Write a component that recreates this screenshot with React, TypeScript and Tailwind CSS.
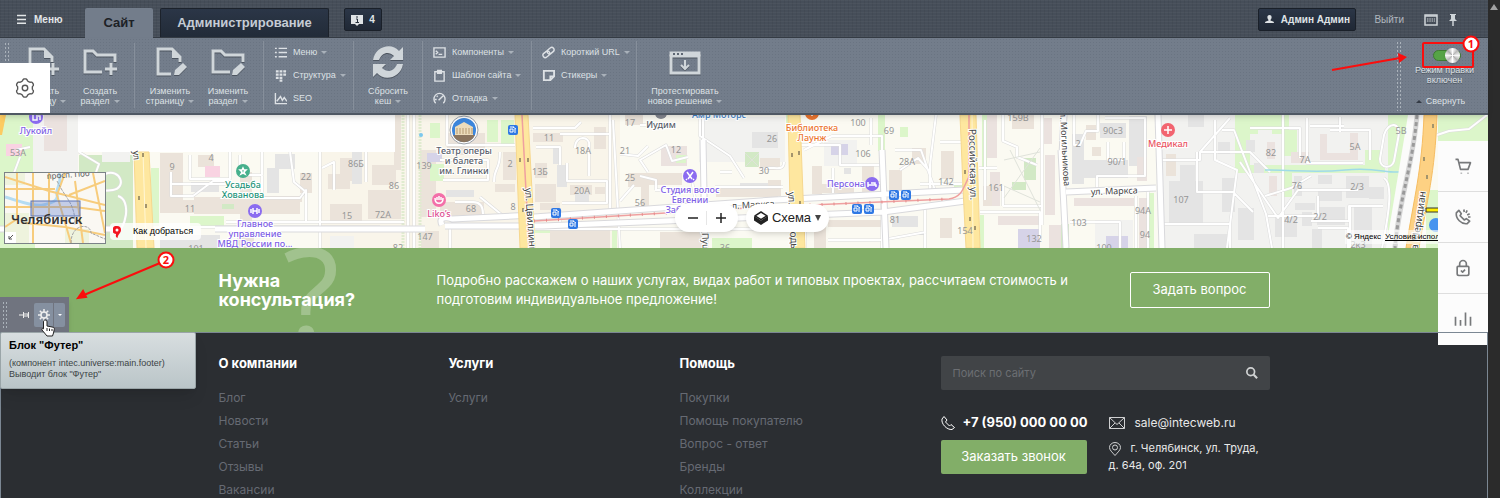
import type { ReactNode } from "react";

type Tint = "sand" | "grey" | "green" | "park" | "violet" | "pink" | "rose" | "land";

const tints: Record<Tint, string> = {
  sand: "#ebe3da",
  grey: "#e4e4e4",
  green: "#dcf6ca",
  park: "#d2e9c5",
  violet: "#d6d3e8",
  pink: "#f9d3e2",
  rose: "#ebe2df",
  land: "#f2f2f0",
};

// x, y, width, height, tint
const areas: [number, number, number, number, Tint][] = [
  [0, 115, 35, 133, "green"], [33, 115, 45, 62, "land"], [44, 115, 23, 36, "rose"], [6, 144, 16, 12, "pink"],
  [79, 155, 54, 93, "park"], [102, 152, 28, 10, "land"], [151, 168, 8, 58, "green"], [160, 153, 23, 49, "sand"],
  [160, 200, 34, 13, "sand"], [194, 197, 106, 17, "sand"], [190, 216, 34, 10, "green"], [191, 182, 28, 10, "grey"],
  [198, 155, 16, 12, "sand"], [205, 166, 15, 11, "pink"], [240, 172, 12, 58, "sand"], [267, 168, 12, 25, "grey"],
  [275, 154, 20, 15, "grey"], [300, 173, 12, 20, "sand"], [222, 204, 12, 5, "park"], [160, 235, 60, 13, "grey"],
  [237, 230, 17, 18, "sand"], [262, 196, 40, 6, "sand"], [340, 158, 15, 23, "sand"], [352, 152, 10, 32, "grey"],
  [328, 174, 22, 15, "sand"], [330, 204, 32, 18, "sand"], [368, 190, 33, 29, "sand"], [372, 165, 24, 20, "sand"],
  [394, 115, 7, 55, "sand"], [430, 123, 10, 15, "green"], [420, 150, 16, 67, "sand"], [427, 153, 15, 9, "violet"],
  [430, 164, 14, 17, "green"], [447, 133, 38, 22, "sand"], [446, 190, 28, 7, "grey"], [440, 202, 44, 15, "sand"],
  [487, 120, 11, 22, "green"], [501, 120, 13, 24, "green"], [503, 152, 13, 28, "sand"], [495, 184, 20, 8, "sand"],
  [533, 133, 30, 9, "sand"], [553, 147, 8, 17, "grey"], [535, 163, 12, 15, "sand"], [557, 165, 10, 22, "grey"],
  [535, 184, 21, 18, "sand"], [570, 185, 22, 10, "sand"], [594, 127, 12, 22, "sand"], [540, 203, 20, 7, "sand"],
  [550, 230, 60, 18, "sand"], [628, 173, 18, 14, "sand"], [641, 180, 8, 26, "sand"], [625, 115, 18, 10, "sand"],
  [595, 187, 10, 7, "sand"], [330, 236, 24, 12, "land"], [421, 231, 18, 17, "sand"], [575, 192, 14, 10, "grey"],
  [530, 230, 20, 3, "green"], [612, 228, 5, 20, "green"], [699, 117, 86, 45, "land"], [752, 132, 26, 16, "grey"],
  [661, 146, 26, 20, "rose"], [676, 155, 10, 8, "green"], [745, 152, 14, 15, "park"], [760, 158, 20, 12, "sand"],
  [716, 188, 62, 9, "sand"], [768, 180, 13, 16, "sand"], [740, 183, 28, 6, "grey"], [642, 173, 40, 12, "sand"],
  [786, 115, 4, 17, "green"], [824, 140, 33, 26, "land"], [831, 144, 17, 11, "violet"], [812, 166, 10, 28, "sand"],
  [822, 184, 32, 9, "sand"], [862, 165, 12, 28, "sand"], [844, 168, 7, 6, "grey"], [889, 170, 13, 24, "sand"],
  [941, 151, 13, 28, "sand"], [912, 148, 14, 16, "sand"], [878, 115, 7, 36, "green"], [900, 127, 8, 10, "green"],
  [814, 216, 12, 32, "sand"], [828, 220, 60, 7, "sand"], [892, 216, 26, 11, "grey"], [660, 232, 44, 16, "sand"],
  [712, 238, 40, 10, "green"], [954, 184, 11, 7, "green"], [940, 218, 12, 20, "sand"], [982, 115, 5, 55, "green"],
  [987, 115, 10, 43, "rose"], [990, 172, 10, 34, "rose"], [983, 186, 9, 20, "sand"], [1012, 115, 22, 14, "sand"],
  [1044, 118, 8, 26, "rose"], [1045, 155, 10, 60, "rose"], [1024, 158, 12, 22, "park"], [1012, 182, 14, 8, "park"],
  [998, 216, 42, 9, "rose"], [1018, 229, 22, 19, "violet"], [980, 215, 4, 33, "green"], [1049, 225, 12, 23, "rose"],
  [1061, 224, 8, 24, "park"], [1072, 134, 12, 50, "grey"], [1084, 160, 44, 18, "grey"], [1100, 123, 26, 15, "grey"],
  [1086, 125, 10, 15, "sand"], [1129, 116, 18, 50, "grey"], [1137, 157, 10, 24, "rose"], [1092, 147, 9, 9, "sand"],
  [1074, 198, 60, 8, "rose"], [1149, 193, 5, 55, "green"], [1139, 198, 9, 50, "rose"], [1095, 220, 38, 28, "land"],
  [1106, 236, 22, 12, "violet"], [1160, 115, 228, 133, "land"], [1169, 181, 34, 43, "grey"], [1180, 165, 15, 25, "grey"],
  [1166, 154, 10, 22, "sand"], [1188, 115, 16, 12, "grey"], [1194, 234, 35, 14, "grey"], [1218, 142, 12, 12, "grey"],
  [1235, 115, 150, 58, "green"], [1250, 115, 135, 50, "land"], [1239, 115, 50, 19, "green"], [1246, 140, 9, 12, "grey"],
  [1258, 130, 14, 26, "land"], [1283, 130, 14, 26, "green"], [1222, 178, 13, 34, "grey"], [1365, 150, 16, 16, "green"],
  [1267, 142, 8, 17, "rose"], [1291, 152, 18, 11, "rose"], [1269, 176, 8, 20, "rose"], [1320, 134, 7, 26, "rose"],
  [1320, 153, 38, 7, "rose"], [1350, 133, 8, 27, "rose"], [1284, 167, 8, 30, "green"], [1254, 163, 10, 10, "grey"],
  [1294, 176, 8, 20, "grey"], [1318, 190, 24, 11, "grey"], [1346, 176, 23, 22, "grey"], [1318, 175, 14, 9, "grey"],
  [1275, 215, 22, 22, "grey"], [1302, 212, 10, 14, "grey"], [1317, 207, 28, 18, "grey"], [1354, 205, 18, 43, "grey"],
  [1312, 229, 10, 19, "grey"], [1295, 203, 20, 7, "grey"], [1238, 208, 16, 32, "grey"], [1438, 115, 50, 28, "green"],
  [1426, 190, 14, 58, "green"], [1369, 187, 15, 12, "grey"], [1388, 115, 22, 133, "green"],
];

// Side streets and yards, drawn as a grey casing with a white core
const lanes = [
  "M16 150l14-3M20 157l-6 16v20", "M8 178h20M79 152l20 12-8 22", "M105 174c16-6 22 14 8 16s-18-2-30 8", "M118 196c14 4 8 34-3 38",
  "M190 155v24h40v-27M171 172v24h22l20-15h15", "M172 184h62M226 222h160", "M200 227h180M240 155v20h22v-24M262 176v22h38l6-8v32",
  "M290 152l4 30 12 10M320 152v96M366 152v30", "M322 168l12-6v28M322 222h82", "M447 115v30h68M440 160h48v20h-45",
  "M480 197l22 18M500 152c0 20-6 14-6 30M455 202h18c8 0 10 6 10 12", "M533 128h42l6-6", "M560 134h50M536 147h24v18M575 148c0-14 16-12 14-2v30",
  "M567 163v18h40v22h-45M610 115v95M613 120l7 128", "M620 154l18 2 10-10M620 201l14-16", "M640 176l16 4v10M640 125h10M700 116v20l30 20 14 22M691 174l10 60",
  "M648 172l-8-12 26-15 6 16 16-4", "M720 172h12M715 187h68M760 170c10-6 24 4 24-8", "M703 115v78M655 190h30", "M850 183h30M800 145h40v20h40",
  "M804 150l28-14h50v34M833 168v25M871 118v27M882 150v98", "M920 184h42M895 150h26l14 40M900 170l18-12 12 14", "M936 115l-6 50v28M940 142h23",
  "M985 120v80M1003 115v26l14 6v10l20 8M979 168h18", "M1042 115v110M1003 206h40M1003 206v-20M980 212h60v28", "M1074 115v30h6l6-14h12v-16",
  "M1105 118h40v58h-48v14", "M1108 142v18h16v-18M1136 196v52M1148 190v60M1070 222h50v26", "M1160 160h40v-8l30-34M1215 120v40l22 10-10 78",
  "M1197 152v40h36l20 20M1160 224h70v24", "M1200 152h50l20 20M1222 130h12l32 84 6 34", "M1240 162l38 56 20-28h60M1265 196l26-8 20-12",
  "M1268 216h50v-20M1311 221h38v-15h34", "M1283 115v133M1250 128h50v30M1307 118v45h56", "M1330 130h40v30M1340 117v15M1310 126h34",
  "M1384 135c4-14 18-14 14 4l-4 22c-2 8-14 8-14-2z", "M1384 178c10 6 4 40-2 70", "M1350 205v43M1318 228h30v20", "M535 229l280 0M828 240h54l44-8",
  "M805 208v40M925 208v40M450 223v25M560 210v14", "M1437 135l12-4 20-2 18-14", "M408 115v133M414 115v133",
];

const mainStreets = [
  "M0 229h120M215 229h210", "M442 225c-4-8 4-8 10-6l82-4", "M445 226h98l340-14 90-12", "M534 217l240-17 190-10",
  "M703 140l2 108", "M882 150l4 98", "M1061 150l5 98", "M1066 192l90-4", "M1158 115l4 133", "M1064 115l-2 40",
];

// x, y, text
const houses: [number, number, string][] = [
  [18, 153, "53А"], [172, 167, "9"], [211, 158, "4"], [190, 209, "11"], [306, 177, "22"], [356, 164, "86Б"], [394, 186, "86"],
  [347, 216, "15"], [383, 215, "72А"], [424, 166, "139"], [425, 237, "147"], [471, 209, "68"], [510, 164, "2"], [513, 207, "8"],
  [549, 138, "11"], [583, 151, "18А"], [540, 172, "13Б"], [630, 123, "17"], [625, 151, "21"], [630, 178, "25"], [640, 203, "56"],
  [582, 191, "20А"], [196, 249, "101"], [398, 248, "82"], [676, 150, "12"], [772, 139, "26"], [764, 171, "30"], [858, 123, "100"],
  [863, 154, "106"], [889, 131, "69"], [907, 162, "28А"], [946, 182, "142"], [895, 220, "81"], [965, 231, "154"], [725, 248, "36"],
  [1018, 118, "159В"], [1078, 144, "2"], [1113, 131, "90с3"], [1117, 162, "90/1"], [996, 188, "161"], [1079, 223, "103"], [1034, 239, "132"],
  [1104, 248, "100"], [1143, 211, "94А"], [1145, 235, "94"], [1181, 200, "107"], [1271, 153, "82"], [1305, 160, "7А"], [1355, 147, "5А"],
  [1401, 131, "5В"], [1297, 186, "76"], [1357, 187, "2/3"], [1291, 220, "4/2"], [1320, 217, "2/2"], [1358, 245, "2к3"],
];

// x, y, colour, lines
const places: [number, number, string, string[]][] = [
  [36, 134, "#7e5fe6", ["Лукойл"]],
  [243, 188, "#25957a", ["Усадьба", "Хованова"]],
  [255, 227, "#7e5fe6", ["Главное", "управление", "МВД России по..."]],
  [464, 154, "#5b5f6b", ["Театр оперы", "и балета", "им. Глинки"]],
  [439, 217, "#dd4b8f", ["Liko’s"]],
  [661, 128, "#5b5f6b", ["Иудим"]],
  [719, 118, "#3f83c9", ["Амр Моторс"]],
  [690, 193, "#7e5fe6", ["Студия волос", "Евгении", "Забелиной"]],
  [812, 131, "#ec7630", ["Библиотека", "Лаунж"]],
  [846, 187, "#7e5fe6", ["Персона"]],
  [1168, 147, "#ea5462", ["Медикал"]],
];

// x, y, colour, glyph path around the centre
const pins: [number, number, string, string][] = [
  [36, 117, "#8b6cf0", "M-3-4v7h4v-7zM2-1h2v4"],
  [243, 171, "#46b08c", "M0-3l1 2h2l-2 2 1 2-2-1-2 1 1-2-2-2h2z"],
  [255, 211, "#8b6cf0", "M-4-2v4M-2-3v6M-2 0h4M2-3v6M4-2v4"],
  [439, 200, "#f36fa9", "M-4-2c0 7 8 7 8 0M-2-3v3M0-4v4M2-3v3"],
  [690, 176, "#8b6cf0", "M-3-4l5 7M3-4l-5 7M-3 3l-1 1M3 3l1 1"],
  [812, 113, "#ec7630", "M0-3v6"],
  [872, 184, "#8b6cf0", "M-4-2v5M-4 1h8v2M-1-1h4v2"],
  [1168, 130, "#f26470", "M0-4v8M-4 0h8"],
];

const trams: [number, number][] = [[513, 130], [556, 213], [573, 224], [894, 195], [906, 195], [857, 209], [869, 209]];

// One-way marks on the main roads
const arrows: [number, number][] = [
  [143, 155], [139, 198], [146, 206], [520, 160], [528, 160], [523, 210], [792, 155], [799, 153],
  [800, 203], [965, 172], [970, 219], [975, 228], [1433, 126], [1424, 159], [1427, 177],
];

function CityMap() {
  return (
    <svg
      viewBox="0 115 1488 133"
      preserveAspectRatio="xMinYMin slice"
      className="block h-[133px] w-full bg-[#fbfaf2] font-['Noto_Sans',sans-serif]"
      role="img"
      aria-label="Карта Челябинска"
    >
      <rect x="320" y="115" width="300" height="133" fill="#f9f5ea" />
      {areas.map(([x, y, w, h, tint], i) => (
        <rect key={i} x={x} y={y} width={w} height={h} fill={tints[tint]} />
      ))}
      <path d="M403 115v133M420 115v133" stroke="#e0ebcf" strokeWidth="3" strokeDasharray="2 1" />
      <g fill="none" strokeLinejoin="round">
        <path d={lanes.join("")} stroke="#dcdcdc" strokeWidth="3" />
        <path d={lanes.join("")} stroke="#ffffff" strokeWidth="2" />
        <path d={mainStreets.join("")} stroke="#d9d9dc" strokeWidth="7" />
        <path d={mainStreets.join("")} stroke="#ffffff" strokeWidth="5" />
        <path d="M1010 150l30 60M1040 148l-36 50M1004 160l36-8M1004 186l36 16M745 153l14 14M759 153l-14 14" stroke="#dfe2da" />
      </g>
      <rect x="78" y="115" width="317" height="37" fill="#ffffff" />
      <path d="M0 115h6l-4 20H0z" fill="#fccb62" />
      <g fill="#fee79f" stroke="#f6d78e">
        <path d="M134 152h15l5 96h-17z" />
        <path d="M515 115h13l7 133h-15z" />
        <path d="M788 115h12l5 133h-14z" />
        <path d="M960 115h16l4 133h-14l-3-60z" />
      </g>
      <path d="M143 152l3 96M972 115l1 133" stroke="#fff7d6" />
      <path d="M522 115l7 133M534 221l230-14 185-8c14-2 14-12 20-22v-62" fill="none" stroke="#efa0a0" strokeWidth="1.5" />
      <path d="M534 221l230-14 185-8" fill="none" stroke="#e58b8b" strokeWidth="3" strokeDasharray="1 11" />
      <path d="M1265 170c30 0 50 3 80 0s40 3 54 2" fill="none" stroke="#9fdbe8" strokeWidth="1.5" />
      <path d="M1408 115h20l-22 133h-20z" fill="#fbfbfa" />
      <path d="M1417 115c-4 50-18 84-22 133" fill="none" stroke="#d6d6d6" strokeWidth="5" />
      <path d="M1417 115c-4 50-18 84-22 133" fill="none" stroke="#9a9a9a" strokeWidth="3" strokeDasharray="4 3" />
      <path d="M1424 115h13c-2 60-10 84-18 133h-13c8-50 16-78 18-133z" fill="#fdd183" stroke="#f6bd62" />
      <g fill="#a3946c">
        {arrows.map(([x, y]) => (
          <path key={`${x}-${y}`} d={`M${x - 1} ${y - 2}h2v4h-2z`} />
        ))}
      </g>
      <g fontSize="9" fill="#969696" textAnchor="middle">
        {houses.map(([x, y, text]) => (
          <text key={`${x}-${y}`} x={x} y={y + 3}>{text}</text>
        ))}
      </g>
      <g fontSize="9" fill="#444444" stroke="#ffffff" strokeWidth="2" paintOrder="stroke">
        <text x="1091" y="195" transform="rotate(-2 1091 195)">ул. Маркса</text>
        <text x="732" y="209" transform="rotate(-3 732 209)">л. Маркса</text>
        <text transform="translate(525 188) rotate(86)" fontSize="10">ул. Цвиллинга</text>
        <text transform="translate(788 192) rotate(87)" fontSize="10">ул. Свободы</text>
        <text transform="translate(702 233) rotate(88)">Пушкина</text>
        <text transform="translate(969 129) rotate(89)" fontSize="10">Российская ул.</text>
        <text transform="translate(1060 112) rotate(87)">л. Могильникова</text>
        <text transform="translate(1417 255) rotate(-82)" fontSize="10">за Меридиан</text>
        <text transform="translate(133 151) rotate(85)">ул</text>
      </g>
      <circle cx="464" cy="130" r="14" fill="#ffffff" stroke="#9aa0a8" />
      <circle cx="464" cy="130" r="12" fill="#3c86dc" />
      <path d="M453 135a12 12 0 0 0 22 0z" fill="#8b755e" />
      <path d="M455 127l9-5 9 5v8h-18z" fill="#ecdcbb" />
      <path d="M457 128v6M460 128v6M463 128v6M466 128v6M469 128v6M472 128v6" stroke="#b59a72" />
      {pins.map(([x, y, color, d]) => (
        <g key={`${x}-${y}`} transform={`translate(${x} ${y})`}>
          <circle r="7" fill={color} />
          <path d={d} fill="none" stroke="#ffffff" strokeWidth="1.5" />
        </g>
      ))}
      {trams.map(([x, y]) => (
        <g key={`${x}-${y}`} transform={`translate(${x} ${y})`}>
          <rect x="-5" y="-5" width="10" height="10" rx="2" fill="#2f78e4" />
          <path d="M-3-3h4M-3-1h3v3h-3zM2-1v4M0-3l3 2" fill="none" stroke="#ffffff" />
        </g>
      ))}
      <circle cx="661" cy="113" r="6" fill="#858891" />
      <circle cx="421" cy="135" r="2" fill="#7cc8ee" />
      <circle cx="1436" cy="225" r="7" fill="#4794ef" />
      <g fontSize="9" fontWeight="500" textAnchor="middle" stroke="#ffffff" strokeWidth="2" paintOrder="stroke">
        {places.map(([x, y, color, lines]) => (
          <text key={`${x}-${y}`} fill={color}>
            {lines.map((line, i) => (
              <tspan key={line} x={x} y={y + i * 10}>{line}</tspan>
            ))}
          </text>
        ))}
      </g>
      <path d="M1426 208h14v4h-14z" fill="#ffee00" stroke="#333333" />
    </svg>
  );
}

function MiniMap() {
  return (
    <svg viewBox="0 0 100 70" className="block h-[70px] w-[100px] bg-[#faf8f3] font-['Noto_Sans',sans-serif]" role="img" aria-label="Обзорная карта">
      <path d="M0 0h20v12H0zM0 40h24v30H0zM60 56h24v14H60z" fill="#eef3dd" />
      <path d="M54 0c4 10-4 16-2 22s-6 8-14 10-24-4-38-8" fill="none" stroke="#b4dcf2" strokeWidth="3" />
      <path d="M0 4l44 14 56 14M0 16h50M12 0v46l-12 8M28 0v70M44 0v50M0 34h70l30 4M60 0l-8 22 14 48M70 8l8 62M88 0l12 60M64 22l36-14M20 50l40 4 40 8" fill="none" stroke="#f7cc7c" strokeWidth="2" />
      <path d="M52 8c10 20 18 22 18 44M66 70c0-20 20-20 20-10l14 6" fill="none" stroke="#a4a4a4" strokeDasharray="3 1" />
      <rect x="26" y="28" width="49" height="15" fill="#5f7fd0" fillOpacity="0.35" stroke="#5d74b5" />
      <text x="42" y="6" fontSize="8" fill="#555555" transform="rotate(-4 42 6)">просп. Поб</text>
      <text x="6" y="51" fontSize="13" fontWeight="600" fill="#333333">Челябинск</text>
      <rect x="0" y="59" width="11" height="11" fill="#ffffff" />
      <path d="M8 62l-4 4M4 63v3h3" fill="none" stroke="#555555" />
    </svg>
  );
}

// Wavy closed outline with n rounded lobes, centred in a 24 unit box
function cogPath(n: number, radius: number, depth: number) {
  const points = Array.from({ length: 120 }, (_, i) => {
    const a = (i / 120) * Math.PI * 2;
    const r = radius + depth * Math.tanh(2 * Math.cos(a * n));
    return `${(12 + r * Math.sin(a)).toFixed(2)} ${(12 - r * Math.cos(a)).toFixed(2)}`;
  });
  return `M${points.join("L")}Z`;
}

function Glyph({ children, className = "size-[14px]" }: { children: ReactNode; className?: string }) {
  return (
    <svg viewBox="0 0 14 14" className={`shrink-0 ${className}`} fill="none" stroke="currentColor" strokeWidth="1.5" aria-hidden="true">
      {children}
    </svg>
  );
}

const plus = <path d="M29 17v12M23 23h12" />;
const pencil = <path d="M22 29l1-5 8-7 4 4-8 8z" fill="currentColor" stroke="none" />;
const page = (
  <>
    <path d="M19 28H6V3h14l8 8v5" />
    <path d="M20 2v10h9z" fill="currentColor" stroke="none" />
  </>
);
const folder = <path d="M20 26H3V5h8l4 4h18v7" />;

function BigIcon({ children }: { children: ReactNode }) {
  return (
    <svg viewBox="0 0 36 32" className="h-8 w-9 text-[#d0d6da] drop-shadow-[0_1px_0_#4d5560]" fill="none" stroke="currentColor" strokeWidth="3" aria-hidden="true">
      {children}
    </svg>
  );
}

function Caret() {
  return <span className="ml-1 inline-block border-x-[3px] border-t-[3px] border-x-transparent border-t-[#a9b1ba] align-middle" />;
}

function BigButton({ icon, lines, className = "w-[58px]" }: { icon: ReactNode; lines: [string, string]; className?: string }) {
  return (
    <button type="button" className={`flex flex-col items-center gap-2 pt-2 text-[9px] leading-[10px] ${className}`}>
      <BigIcon>{icon}</BigIcon>
      <span className="whitespace-nowrap">
        {lines[0]}
        <br />
        {lines[1]}
        <Caret />
      </span>
    </button>
  );
}

function SmallButton({ icon, label, caret = true }: { icon: ReactNode; label: string; caret?: boolean }) {
  return (
    <button type="button" className="flex h-[23px] shrink-0 items-center gap-[6px] text-[9px] whitespace-nowrap">
      <Glyph className="size-[13px]">{icon}</Glyph>
      <span>
        {label}
        {caret && <Caret />}
      </span>
    </button>
  );
}

function Grip({ className }: { className: string }) {
  return <div className={`w-[5px] bg-[radial-gradient(#aab2ba_1px,transparent_1px)] bg-[length:3px_4px] ${className}`} />;
}

function TopBar() {
  return (
    <header className="flex h-[38px] items-start border-b border-[#353c45] bg-[#464e59] bg-[repeating-linear-gradient(0deg,#ffffff08_0_1px,transparent_1px_3px),repeating-linear-gradient(90deg,#0000000d_0_1px,transparent_1px_4px)] pt-2 text-[10px]">
      <button type="button" className="flex h-[22px] w-[85px] items-center gap-2 pl-4 font-bold text-[#e3e6e8]">
        <svg viewBox="0 0 10 10" className="size-[10px]" stroke="currentColor" strokeWidth="1.5" aria-hidden="true">
          <path d="M1 1.5h9M1 5.5h9M1 9.2h9" />
        </svg>
        Меню
      </button>
      <nav className="flex gap-[7px] text-[13px] font-bold">
        <a href="#site" className="flex h-[30px] w-[68px] items-center justify-center rounded-t-xs bg-[#737d8b] text-[#1d2126]">Сайт</a>
        <a href="#admin" className="flex h-[29px] w-[169px] items-center justify-center rounded-t-xs border border-b-0 border-[#1c222b] bg-linear-to-b from-[#2b3647] to-[#222b38] text-[#c5ccd5]">Администрирование</a>
      </nav>
      <button type="button" className="ml-[15px] flex h-[23px] w-[38px] items-center justify-center gap-[6px] rounded-xs border border-[#1a2029] bg-linear-to-b from-[#2b3647] to-[#202835] font-bold text-[#dfe3e6]">
        <svg viewBox="0 0 12 12" className="size-3" aria-hidden="true">
          <path d="M0 1h12v9H8l-2 2-2-2H0z" fill="#dfe3e6" />
          <path d="M5 3h2M5 5h1.5v3M4.5 8.500h3.5" stroke="#27303d" fill="none" />
        </svg>
        4
      </button>
      <div className="mr-7 ml-auto flex items-center">
        <button type="button" className="flex h-[23px] w-[98px] items-center justify-center gap-[7px] rounded-xs border border-[#1a2029] bg-linear-to-b from-[#2b3647] to-[#202835] font-bold whitespace-nowrap text-[#dfe3e6]">
          <svg viewBox="0 0 10 10" className="size-[9px] shrink-0" fill="currentColor" aria-hidden="true">
            <path d="M5 0c2 0 2.5 1.5 2.3 3S6 5.200 6 6l3 1.200c.8.4 1 1 1 1.800H0c0-.8.2-1.4 1-1.800L4 6c0-.8-1.1-1.5-1.3-3S3 0 5 0z" />
          </svg>
          Админ Админ
        </button>
        <a href="#logout" className="ml-[18px] text-[#b0b7bf]">Выйти</a>
        <button type="button" aria-label="Горячие клавиши" className="ml-[20px] text-[#cfd5d9]">
          <Glyph>
            <path d="M1 2h12v10H1z" />
            <path d="M1 3h12" />
            <path d="M3 6h8M3 8h8" strokeDasharray="1.5 0.8" strokeWidth="1" />
          </Glyph>
        </button>
        <button type="button" aria-label="Закрепить панель" className="ml-2 text-[#cfd5d9]">
          <Glyph>
            <path d="M4 1h6v1H9v4l2 2H3l2-2V2H4z" fill="currentColor" stroke="none" />
            <path d="M7 8v5" />
          </Glyph>
        </button>
      </div>
    </header>
  );
}

function Toolbar() {
  return (
    <div className="relative flex h-[77px] border-b-2 border-[#4f5864] bg-[#737d8b] bg-[radial-gradient(#6a7482_1px,transparent_1px)] bg-[length:3px_3px] text-[#dde1e5] shadow-md [text-shadow:0_1px_0_#4d5560]">
      <Grip className="mt-1 ml-1 h-[68px]" />
      <div className="ml-1 flex">
        <BigButton icon={<>{page}{plus}</>} lines={["Создать", "страницу"]} />
        <BigButton icon={<>{folder}{plus}</>} lines={["Создать", "раздел"]} />
      </div>
      <div className="my-[5px] ml-[5px] border-l border-[#868f9b]" />
      <div className="flex px-[6px]">
        <BigButton icon={<>{page}{pencil}</>} lines={["Изменить", "страницу"]} />
        <BigButton icon={<>{folder}{pencil}</>} lines={["Изменить", "раздел"]} />
      </div>
      <div className="mt-[3px] mb-[3px] flex w-[91px] flex-col border-x border-[#868f9b] pl-[10px]">
        <SmallButton label="Меню" icon={<path d="M5 2.500h9M5 7h9M5 11.500h9M1 2.500h2M1 7h2M1 11.500h2" />} />
        <SmallButton label="Структура" icon={<path d="M2 2.500h3M6 2.500h3M10 2.500h3M2 6h3M6 6h3M10 6h3M2 9.500h3M6 9.500h3M6 12.500h3" strokeWidth="2.5" />} />
        <SmallButton label="SEO" caret={false} icon={<path d="M1.5 1v11.500H14M3 10l4-5 2 4 2-3 3 4" />} />
      </div>
      <BigButton
        className="w-[68px]"
        lines={["Сбросить", "кеш"]}
        icon={
          <g fill="currentColor" stroke="none">
            <path d="M3 14C5 0 22-4 29 5l4-4v13H20l4-4c-5-5-12-4-15 4z" />
            <path d="M33 18C31 32 14 36 7 27l-4 4V18h13l-4 4c5 5 12 4 15-4z" />
          </g>
        }
      />
      <div className="mt-[3px] mb-[3px] flex w-[109px] flex-col border-l border-[#868f9b] pl-[10px]">
        <SmallButton label="Компоненты" icon={<path d="M1 2h12v10H1zM3 5l2 2-2 2M6 9h4" />} />
        <SmallButton label="Шаблон сайта" icon={<path d="M2 3h10v10H2zM5 1.500h4v3H5z" />} />
        <SmallButton label="Отладка" icon={<path d="M3 12a6 6 0 1 1 8 0M6 9l5-5M2 8h2M4 4l1 1" />} />
      </div>
      <div className="mt-[3px] mb-[3px] flex w-[106px] flex-col border-x border-[#868f9b] pl-[10px]">
        <SmallButton
          label="Короткий URL"
          icon={
            <g transform="rotate(-40 7 7)">
              <rect x="0" y="4.5" width="8" height="5" rx="2.5" />
              <rect x="6" y="4.5" width="8" height="5" rx="2.5" />
            </g>
          }
        />
        <SmallButton label="Стикеры" icon={<path d="M2 2h11v6l-4 4H2zM13 8H9v4" strokeWidth="2" />} />
      </div>
      <BigButton
        className="w-24"
        lines={["Протестировать", "новое решение"]}
        icon={
          <>
            <path d="M4 10h28v17H4z" />
            <path d="M2.5 5.500h31v5h-31z" fill="currentColor" stroke="none" />
            <path d="M6 8h2M10 8h2M14 8h2" stroke="#5d6673" strokeWidth="2" />
            <path d="M18 14v9M14 19l4 4 4-4" strokeWidth="2" />
          </>
        }
      />
      <Grip className="mt-[3px] ml-auto h-[70px]" />
      <div className="flex w-[87px] flex-col items-center pt-3 text-[9px] leading-[10px]">
        <label className="flex flex-col items-center text-center">
          <input
            type="checkbox"
            defaultChecked
            className="relative mb-1 ml-[6px] h-[11px] w-[28px] appearance-none rounded-full border border-[#3f7a32] bg-[#56a346] before:absolute before:-top-[3px] before:right-0 before:size-[15px] before:rounded-full before:bg-[conic-gradient(#fff,#b9b9b9,#f5f5f5,#b0b0b0,#fff,#b9b9b9,#f5f5f5,#b0b0b0,#fff)] before:shadow"
          />
          Режим правки
          <br />
          включен
        </label>
        <button type="button" className="mt-[11px] flex items-center gap-1 pr-2">
          <span className="border-x-[3px] border-b-[3px] border-x-transparent border-b-[#343b45]" />
          Свернуть
        </button>
      </div>

      <button type="button" aria-label="Настройки" className="absolute top-[25px] left-0 flex h-[50px] w-[50px] items-center justify-center bg-white text-[#555555]">
        <svg viewBox="0 0 24 24" className="size-[22px]" fill="none" stroke="currentColor" strokeWidth="1.5" strokeLinejoin="round" aria-hidden="true">
          <path d={cogPath(6, 9, 1)} />
          <circle cx="12" cy="12" r="3" />
        </svg>
      </button>

      <svg viewBox="1308 38 180 77" className="pointer-events-none absolute top-0 right-0 h-[77px] w-[180px] overflow-visible" fill="none" stroke="#fb0d0d" strokeWidth="2" aria-hidden="true">
        <rect x="1423" y="43" width="50" height="24" rx="1" />
        <path d="M1332 70l68-12" />
        <path d="M1398 53l9 4-8 6z" fill="#fb0d0d" stroke="none" />
        <circle cx="1471" cy="44" r="7.5" fill="#ffffff" />
        <text x="1471" y="48" fontSize="11" fontWeight="700" textAnchor="middle" fill="#fb0d0d" stroke="none" className="font-['Open_Sans',sans-serif] [text-shadow:none]">1</text>
      </svg>
    </div>
  );
}

function MapSection() {
  return (
    <section className="relative h-[133px] overflow-hidden">
      <CityMap />
      <div className="absolute bottom-1 left-1 border border-[#7b8287]">
        <MiniMap />
      </div>
      <button type="button" className="absolute bottom-2 left-[110px] flex h-[17px] items-center gap-3 rounded-sm bg-white/80 px-[3px] pr-2 font-['Liberation_Sans',sans-serif] text-[9px] text-black">
        <svg viewBox="0 0 8 12" className="h-3 w-2" aria-hidden="true">
          <path d="M4 0a4 4 0 0 1 4 4c0 3-3 4-3.5 8C2 11 3 9 3 8a4 4 0 0 1 1-8z" fill="#f31621" />
          <circle cx="4" cy="4" r="1.5" fill="#ffffff" />
        </svg>
        Как добраться
      </button>
      <div className="absolute top-[89px] left-[675px] flex gap-2 font-['Liberation_Sans',sans-serif] text-[13px] text-[#222222]">
        <div className="flex h-7 w-[63px] items-center divide-x divide-[#e6e6e6] rounded-full bg-white shadow-md">
          <button type="button" aria-label="Отдалить" className="flex flex-1 justify-center pl-1">
            <Glyph><path d="M2 7h10" /></Glyph>
          </button>
          <button type="button" aria-label="Приблизить" className="flex flex-1 justify-center pr-1">
            <Glyph><path d="M2 7h10M7 2v10" /></Glyph>
          </button>
        </div>
        <button type="button" className="flex h-7 w-[83px] items-center justify-center gap-1 rounded-full bg-white whitespace-nowrap shadow-md">
          <svg viewBox="0 0 14 14" className="size-[14px] shrink-0" fill="none" stroke="currentColor" strokeLinejoin="round" aria-hidden="true">
            <path d="M7 1l6 3.800L7 8.600 1 4.800z" strokeWidth="1.5" />
            <path d="M0 5v4.500L7 14l7-4.500V5L7 9.500z" fill="currentColor" stroke="none" />
          </svg>
          Схема
          <span className="border-x-[3px] border-t-[6px] border-x-transparent border-t-[#444444]" />
        </button>
      </div>
      <p className="absolute bottom-1 left-[1345px] flex h-[14px] items-center gap-1 bg-white/60 px-px font-['Liberation_Sans',sans-serif] text-[8px] whitespace-nowrap text-black">
        © Яндекс <a href="#terms" className="underline">Условия использования</a>
      </p>
    </section>
  );
}

function Consultation() {
  return (
    <section className="relative h-[84px] overflow-hidden bg-[#82ae68] font-[Inter,sans-serif] text-white">
      <span className="absolute -top-[22px] left-[283px] font-['Noto_Sans',sans-serif] text-[130px] leading-[130px] text-white/25" aria-hidden="true">?</span>
      <div className="relative mx-auto flex max-w-[1051px] pt-[23px]">
        <h2 className="w-[218px] shrink-0 text-[18px] leading-[19px] font-bold">Нужна<br />консультация?</h2>
        <p className="w-[650px] text-[13px] leading-[19px]">
          Подробно расскажем о наших услугах, видах работ и типовых проектах, рассчитаем стоимость и подготовим индивидуальное предложение!
        </p>
        <button type="button" className="mt-px ml-auto h-9 w-[140px] rounded-xs border border-white text-[13px]">Задать вопрос</button>
      </div>
    </section>
  );
}

const columns = [
  { title: "О компании", links: ["Блог", "Новости", "Статьи", "Отзывы", "Вакансии"] },
  { title: "Услуги", links: ["Услуги"] },
  { title: "Помощь", links: ["Покупки", "Помощь покупателю", "Вопрос - ответ", "Бренды", "Коллекции"] },
];

function Footer() {
  return (
    <footer className="relative h-[166px] bg-[#2b2e32] font-[Inter,sans-serif] text-white">
      <div className="mx-auto grid max-w-[1051px] grid-cols-[230px_231px_261px_1fr] pt-[22px]">
        {columns.map((column) => (
          <nav key={column.title} className="text-[12px]">
            <h3 className="text-[13px] leading-[18px] font-bold">{column.title}</h3>
            <ul className="mt-[14px] leading-[23px] text-[#666a73]">
              {column.links.map((link) => (
                <li key={link}><a href="#footer">{link}</a></li>
              ))}
            </ul>
          </nav>
        ))}
        <div className="pt-[2px] text-[12px] text-[#e8e8e8]">
          <form className="flex h-[34px] items-center rounded-xs bg-[#414447] pr-3" onSubmit={(e) => e.preventDefault()}>
            <input type="search" aria-label="Поиск по сайту" placeholder="Поиск по сайту" className="h-full min-w-0 flex-1 px-3 text-[11px] outline-none placeholder:text-[#6c6f73]" />
            <button type="submit" aria-label="Найти" className="text-[#d0d2d3]">
              <Glyph className="size-3"><circle cx="5.5" cy="5.5" r="4.5" strokeWidth="2" /><path d="M9 9l4 4" strokeWidth="2.5" /></Glyph>
            </button>
          </form>
          <div className="mt-[23px] flex gap-[22px]">
            <div className="w-[146px] shrink-0">
              <a href="tel:+79500000000" className="flex h-[19px] items-center gap-2 text-[13px] font-bold whitespace-nowrap text-white">
                <Glyph>
                  <path d="M1 3l2-2.500 3 3.500-1.5 2 4 4 1.5-1.5 3.500 3-2.500 2C6 14 0 8 1 3z" strokeWidth="1" />
                </Glyph>
                +7 (950) 000 00 00
              </a>
              <button type="button" className="mt-2 h-[34px] w-full rounded-xs bg-[#82ae68] text-[13px] text-white">Заказать звонок</button>
            </div>
            <div className="flex-1">
              <a href="mailto:sale@intecweb.ru" className="flex h-[20px] items-center gap-[10px]">
                <svg viewBox="0 0 16 12" className="h-3 w-4" fill="none" stroke="#cfd0d1" aria-hidden="true">
                  <path d="M.5.500h15v11H.5zM.5.500L8 7.500l7.500-7M.5 11.500L6 6M15.500 11.500L10 6" />
                </svg>
                sale@intecweb.ru
              </a>
              <address className="mt-[7px] text-[11px] leading-[17px] not-italic">
                <svg viewBox="0 0 12 14" className="mr-[10px] inline-block h-[14px] w-3" fill="none" stroke="#cfd0d1" aria-hidden="true">
                  <path d="M6 13.500C3 10 .5 8 .5 5.500a5.500 5 0 0 1 11 0C11.500 8 9 10 6 13.500z" />
                  <circle cx="6" cy="5.500" r="2.500" />
                </svg>
                г. Челябинск, ул. Труда, д. 64а, оф. 201
              </address>
            </div>
          </div>
        </div>
      </div>
      <div className="pointer-events-none absolute inset-0 z-20 border border-b-0 border-[#7b8793]" />
    </footer>
  );
}

const sideIcons = [
  { label: "Корзина", d: "M3 4h3l3 12h9L21 8H8M10 20v1M18 20v1" },
  { label: "Заказать звонок", d: "M4 7l3-3 3 4-1.500 2.500 5 5L16 14l4 3-3 3C10 21 3 14 4 7zM13 3l.5 3M17 4l-1.500 3M20 8l-3 1.500M21 12h-3" },
  { label: "Войти", d: "M6 10h12c1 0 1 0 1 1v8c0 1-1 2-2 2H7c-1 0-2-1-2-2v-8c0-1 0-1 1-1zM8 10V7a4 4 0 0 1 8 0v3M9.500 15l2 2 3-3" },
  { label: "Сравнение", d: "M3 8v11M9 12v7M15 3v16M21 8v11" },
];

function SidePanel() {
  return (
    <aside className="absolute top-[141px] right-0 z-10 flex h-[204px] w-[50px] flex-col divide-y divide-[#dedede] bg-[#fcfcfc] text-[#77797b]">
      {sideIcons.map((icon) => (
        <button key={icon.label} type="button" aria-label={icon.label} className="flex h-[51px] items-center justify-center">
          <svg viewBox="0 0 24 24" className="size-5" fill="none" stroke="currentColor" strokeWidth="2" strokeLinejoin="round" aria-hidden="true">
            <path d={icon.d} />
          </svg>
        </button>
      ))}
    </aside>
  );
}

function BlockEditor() {
  return (
    <div className="absolute top-[297px] left-0 z-30 w-[196px]">
      <div className="flex h-[35px] w-[69px] items-center bg-[#70747f] text-[#eeeeee] shadow-md">
        <Grip className="ml-[2px] h-7" />
        <button type="button" aria-label="Закрепить" className="ml-3">
          <svg viewBox="0 0 10 8" className="h-2 w-[10px]" fill="none" stroke="currentColor" aria-hidden="true">
            <path d="M0 4h4M4.500 1v6M5 3h4v2H5M9.500 1v6" />
          </svg>
        </button>
        <div className="ml-[5px] flex h-6 items-center divide-x divide-[#70747f] rounded-xs bg-[#8590a0]">
          <button type="button" aria-label="Параметры" className="flex h-full w-5 items-center justify-center">
            <svg viewBox="0 0 12 12" className="size-3" fill="none" stroke="currentColor" strokeWidth="1.5" aria-hidden="true">
              <circle cx="6" cy="6" r="3" />
              <path d="M6 0v3M6 9v3M0 6h3M9 6h3M1.800 1.800l2 2M8.200 8.200l2 2M10.200 1.800l-2 2M3.800 8.200l-2 2" />
            </svg>
          </button>
          <button type="button" aria-label="Ещё" className="flex h-full w-[11px] items-center justify-center">
            <span className="border-x-2 border-t-2 border-x-transparent border-t-white" />
          </button>
        </div>
      </div>
      <div role="tooltip" className="h-[57px] rounded-xs border border-[#9aa5a8] bg-linear-to-b from-[#d8dee0] to-[#bac5c8] px-2 pt-[6px] text-[9px] leading-[11px] text-[#3c4345] shadow-lg">
        <b className="mb-[7px] block text-[11px] leading-3 text-black">Блок "Футер"</b>
        (компонент intec.universe:main.footer)
        <br />
        Выводит блок "Футер"
      </div>
      <svg viewBox="0 0 14 18" className="absolute top-[22px] left-[41px] h-[18px] w-[14px]" aria-hidden="true">
        <path d="M4 1c1.500 0 2 .8 2 2v4l6 1.200c1 .3 1.500 1 1.300 2L12.500 14l-1 3H6L1 11c-.5-1 .5-2 1.500-1.200V3C2.500 1.800 3 1 4 1z" fill="#ffffff" stroke="#222222" />
        <path d="M6 9v3M8.500 9.500V12M11 10v2" stroke="#222222" />
      </svg>
    </div>
  );
}

export default function App() {
  return (
    <div className="flex h-screen overflow-hidden bg-[#2b2b2b]">
      <div className="relative min-w-0 flex-1 font-['Liberation_Sans',sans-serif]">
        <TopBar />
        <div className="relative z-10">
          <Toolbar />
        </div>
        <MapSection />
        <Consultation />
        <Footer />
        <SidePanel />
        <BlockEditor />
        <svg viewBox="70 248 110 60" className="pointer-events-none absolute top-[248px] left-[70px] z-20 h-[60px] w-[110px]" stroke="#fb0d0d" strokeWidth="2" aria-hidden="true">
          <path d="M160 263l-76 32" />
          <path d="M78 298l5-7 3 6z" fill="#fb0d0d" />
          <circle cx="166" cy="260" r="7.5" fill="#ffffff" />
          <text x="166" y="264" fontSize="11" fontWeight="700" textAnchor="middle" fill="#fb0d0d" stroke="none" className="font-['Open_Sans',sans-serif]">2</text>
        </svg>
      </div>
      <div className="flex w-3 justify-center pt-1" aria-hidden="true">
        <span className="h-[6px] border-x-4 border-b-[6px] border-x-transparent border-b-[#a0a0a0]" />
      </div>
    </div>
  );
}
